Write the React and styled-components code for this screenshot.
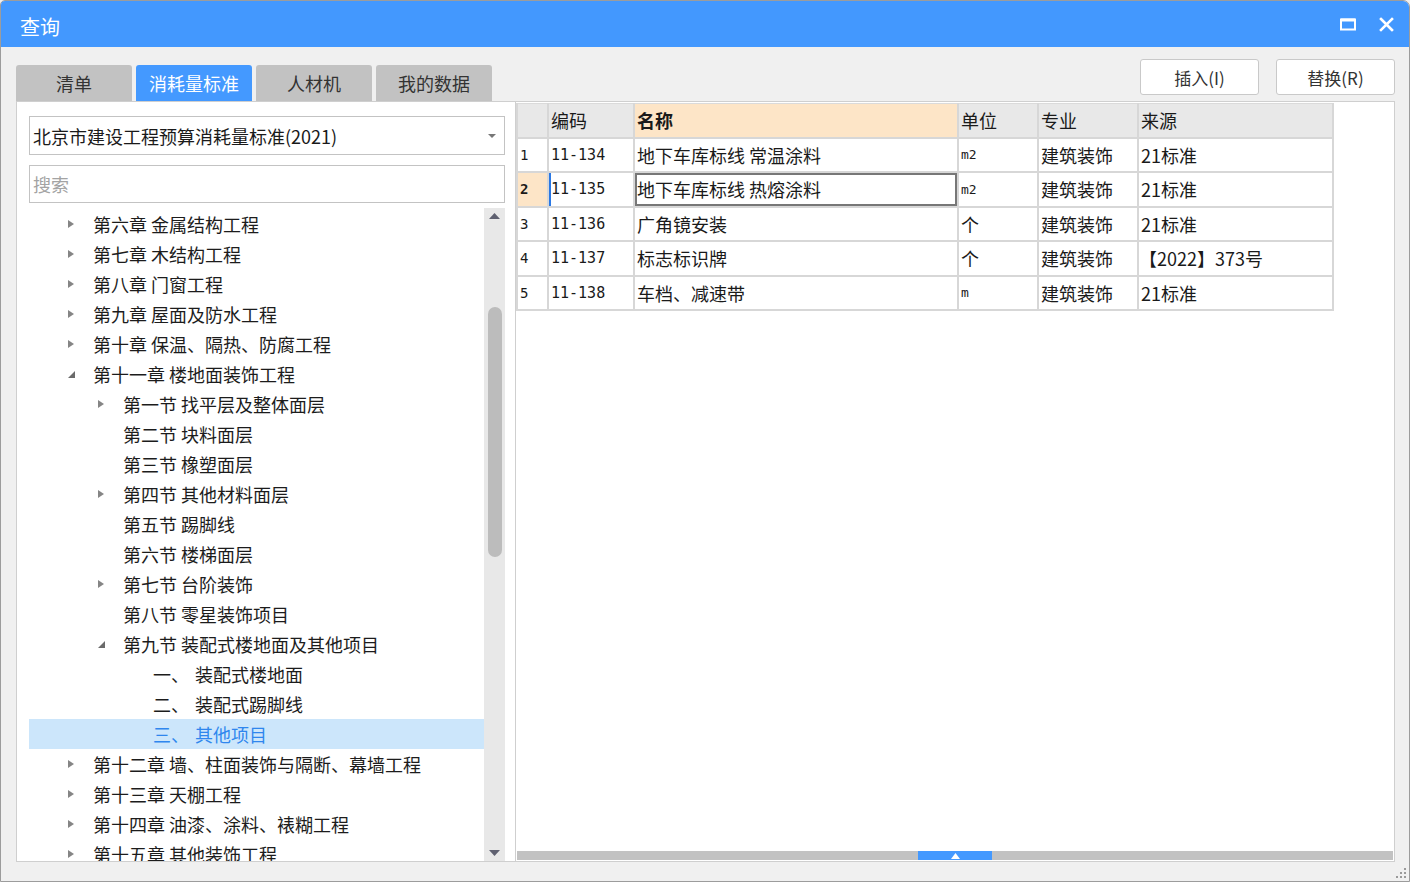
import React from "react";
import styled, { createGlobalStyle } from "styled-components";

const GlobalStyle = createGlobalStyle`
  html, body {
    margin: 0;
    padding: 0;
    background: #f0f0f0;
  }
  body {
    font-family: "Noto Sans CJK SC", "Noto Sans", sans-serif;
    color: #1a1a1a;
  }
  * {
    box-sizing: border-box;
  }
`;

const Window = styled.div`
  width: 1410px;
  height: 882px;
  border: 1px solid #9c9c9c;
  border-radius: 5px 7px 0 0;
  background: #f0f0f0;
  display: flex;
  flex-direction: column;
  overflow: hidden;
`;

const TitleBar = styled.div`
  height: 46px;
  flex: none;
  background: #4398fe;
  display: flex;
  align-items: center;
  padding: 0 11px 0 19px;
`;

const Title = styled.div`
  color: #fff;
  font-size: 20px;
  flex: 1;
  padding-top: 4px;
`;

const TitleButton = styled.div`
  width: 24px;
  height: 24px;
  display: flex;
  align-items: center;
  justify-content: center;
  margin-left: 14px;
`;

const Content = styled.div`
  flex: 1;
  display: flex;
  flex-direction: column;
  padding: 0 14px 0 15px;
`;

const TopRow = styled.div`
  height: 54px;
  flex: none;
  display: flex;
  justify-content: space-between;
`;

const Tabs = styled.div`
  display: flex;
  align-items: flex-end;
  gap: 4px;
`;

const Tab = styled.div`
  width: 116px;
  height: 36px;
  border-radius: 3px 3px 0 0;
  background: ${(p) => (p.$active ? "#4499ff" : "#c2c2c2")};
  color: ${(p) => (p.$active ? "#fff" : "#333")};
  font-size: 18px;
  display: flex;
  align-items: center;
  justify-content: center;
`;

const Actions = styled.div`
  display: flex;
  gap: 17px;
  padding-top: 12px;
`;

const Button = styled.div`
  width: 119px;
  height: 36px;
  background: #fff;
  border: 1px solid #c9c9c9;
  border-radius: 3px;
  font-size: 17px;
  color: #333;
  display: flex;
  align-items: center;
  justify-content: center;
`;

const Panels = styled.div`
  height: 761px;
  flex: none;
  display: flex;
`;

const LeftPanel = styled.div`
  width: 499px;
  background: #fff;
  border: 1px solid #cfcfcf;
  border-right: none;
  padding: 14px 10px 0 12px;
  display: flex;
  flex-direction: column;
`;

const Combo = styled.div`
  height: 39px;
  flex: none;
  border: 1px solid #c3c3c3;
  display: flex;
  align-items: center;
  padding: 0 8px 0 3px;
  font-size: 18px;
`;

const ComboText = styled.div`
  flex: 1;
`;

const ComboArrow = styled.div`
  width: 0;
  height: 0;
  border-left: 4px solid transparent;
  border-right: 4px solid transparent;
  border-top: 4px solid #777;
`;

const Search = styled.div`
  height: 38px;
  flex: none;
  margin-top: 10px;
  border: 1px solid #c3c3c3;
  display: flex;
  align-items: center;
  padding-left: 3px;
  font-size: 18px;
  color: #a3a3a3;
`;

const TreeArea = styled.div`
  flex: 1;
  margin-top: 5px;
  display: flex;
  min-height: 0;
`;

const TreeList = styled.div`
  flex: 1;
  overflow: hidden;
  padding-top: 1px;
`;

const TreeRow = styled.div`
  height: 30px;
  display: flex;
  align-items: center;
  padding-left: ${(p) => 39 + p.$level * 30}px;
  background: ${(p) => (p.$selected ? "#cce6fb" : "transparent")};
  color: ${(p) => (p.$selected ? "#2f86ee" : "#1c1c1c")};
  font-size: 18px;
  white-space: pre;
`;

const Toggle = styled.div`
  width: 25px;
  flex: none;
  display: flex;
  align-items: center;
`;

const Collapsed = styled.div`
  width: 0;
  height: 0;
  border-top: 4.5px solid transparent;
  border-bottom: 4.5px solid transparent;
  border-left: 6px solid #858585;
`;

const Num = styled.span`
  display: inline-block;
  width: 42px;
`;

const VScroll = styled.div`
  width: 21px;
  flex: none;
  background: #e8e8e8;
  display: flex;
  flex-direction: column;
  align-items: center;
`;

const ScrollArrow = styled.div`
  height: 16px;
  flex: none;
  display: flex;
  align-items: center;
  justify-content: center;
`;

const VTrack = styled.div`
  flex: 1;
  width: 100%;
  display: flex;
  justify-content: center;
  padding-top: 83px;
`;

const VThumb = styled.div`
  width: 14px;
  height: 250px;
  border-radius: 7px;
  background: #bcbcbc;
`;

const RightPanel = styled.div`
  flex: 1;
  background: #fff;
  border: 1px solid #cfcfcf;
  padding: 1px 1px 1px 0;
  display: flex;
  flex-direction: column;
`;

const TableArea = styled.div`
  flex: 1;
`;

const Grid = styled.table`
  border-collapse: collapse;
  table-layout: fixed;
  width: 816px;
  border-top: 1px solid #dadada;
`;

const HeadCell = styled.th`
  height: 34px;
  padding: 0 0 0 2px;
  text-align: left;
  font-size: 18px;
  font-weight: ${(p) => (p.$active ? 700 : 400)};
  background: ${(p) => (p.$active ? "#fde5c7" : "#e8e8e8")};
  border: 2px solid #d7d7d7;
  border-top: none;
  border-bottom: ${(p) => (p.$active ? "1px solid #6fa9f2" : "2px solid #d7d7d7")};
`;

const Cell = styled.td`
  height: 34.5px;
  padding: 0 0 0 ${(p) => (p.$pad ?? 2)}px;
  font-size: ${(p) => p.$size || 18}px;
  font-family: ${(p) =>
    p.$mono
      ? '"DejaVu Sans Mono", "Liberation Mono", monospace'
      : '"Noto Sans CJK SC", "Noto Sans", sans-serif'};
  font-weight: ${(p) => (p.$bold ? 700 : 400)};
  background: ${(p) => (p.$marked ? "#fde5c7" : "#fff")};
  border: 2px solid #d7d7d7;
  white-space: nowrap;
  box-shadow: ${(p) =>
    p.$current
      ? "inset 0 0 0 2px #777"
      : p.$leftMark
      ? "inset 2px 0 0 0 #2a78e4"
      : "none"};
`;

const HScroll = styled.div`
  height: 9px;
  flex: none;
  margin-left: 1px;
  background: #c2c2c2;
  display: flex;
  padding-left: 401px;
`;

const HThumb = styled.div`
  width: 74px;
  height: 9px;
  background: #4499ff;
  display: flex;
  align-items: center;
  justify-content: center;
`;

const Footer = styled.div`
  flex: 1;
  display: flex;
  justify-content: flex-end;
  align-items: flex-end;
  padding-bottom: 2px;
  margin-right: -12px;
`;

const Grip = () => (
  <svg width="12" height="12" viewBox="0 0 12 12">
    {[
      [9, 1],
      [9, 5],
      [5, 5],
      [9, 9],
      [5, 9],
      [1, 9],
    ].map(([x, y]) => (
      <rect key={`${x}-${y}`} x={x} y={y} width="2" height="2" fill="#9a9a9a" />
    ))}
  </svg>
);

const Expanded = () => (
  <svg width="9" height="9" viewBox="0 0 9 9" style={{ marginLeft: -1 }}>
    <polygon points="8,1 8,8 1,8" fill="#6b6b6b" />
  </svg>
);

const tree = [
  { level: 0, toggle: "c", text: "第六章 金属结构工程" },
  { level: 0, toggle: "c", text: "第七章 木结构工程" },
  { level: 0, toggle: "c", text: "第八章 门窗工程" },
  { level: 0, toggle: "c", text: "第九章 屋面及防水工程" },
  { level: 0, toggle: "c", text: "第十章 保温、隔热、防腐工程" },
  { level: 0, toggle: "e", text: "第十一章 楼地面装饰工程" },
  { level: 1, toggle: "c", text: "第一节 找平层及整体面层" },
  { level: 1, text: "第二节 块料面层" },
  { level: 1, text: "第三节 橡塑面层" },
  { level: 1, toggle: "c", text: "第四节 其他材料面层" },
  { level: 1, text: "第五节 踢脚线" },
  { level: 1, text: "第六节 楼梯面层" },
  { level: 1, toggle: "c", text: "第七节 台阶装饰" },
  { level: 1, text: "第八节 零星装饰项目" },
  { level: 1, toggle: "e", text: "第九节 装配式楼地面及其他项目" },
  { level: 2, num: "一、", text: "装配式楼地面" },
  { level: 2, num: "二、", text: "装配式踢脚线" },
  { level: 2, num: "三、", text: "其他项目", selected: true },
  { level: 0, toggle: "c", text: "第十二章 墙、柱面装饰与隔断、幕墙工程" },
  { level: 0, toggle: "c", text: "第十三章 天棚工程" },
  { level: 0, toggle: "c", text: "第十四章 油漆、涂料、裱糊工程" },
  { level: 0, toggle: "c", text: "第十五章 其他装饰工程" },
];

const rows = [
  { code: "11-134", name: "地下车库标线 常温涂料", unit: "m2", major: "建筑装饰", source: "21标准" },
  { code: "11-135", name: "地下车库标线 热熔涂料", unit: "m2", major: "建筑装饰", source: "21标准" },
  { code: "11-136", name: "广角镜安装", unit: "个", major: "建筑装饰", source: "21标准" },
  { code: "11-137", name: "标志标识牌", unit: "个", major: "建筑装饰", source: "【2022】373号" },
  { code: "11-138", name: "车档、减速带", unit: "m", major: "建筑装饰", source: "21标准" },
];

const tabs = ["清单", "消耗量标准", "人材机", "我的数据"];

export default function App() {
  const currentRow = 1;
  return (
    <>
      <GlobalStyle />
      <Window>
        <TitleBar>
          <Title>查询</Title>
          <TitleButton>
            <svg width="16" height="13" viewBox="0 0 16 13">
              <rect x="1" y="1.5" width="14" height="10" fill="none" stroke="#fff" strokeWidth="2" />
              <rect x="1" y="0.5" width="14" height="3" fill="#fff" />
            </svg>
          </TitleButton>
          <TitleButton>
            <svg width="15" height="15" viewBox="0 0 15 15">
              <path d="M2 2 L13 13 M13 2 L2 13" stroke="#fff" strokeWidth="2.6" strokeLinecap="square" />
            </svg>
          </TitleButton>
        </TitleBar>

        <Content>
          <TopRow>
            <Tabs>
              {tabs.map((t, i) => (
                <Tab key={t} $active={i === 1}>
                  {t}
                </Tab>
              ))}
            </Tabs>
            <Actions>
              <Button>插入(I)</Button>
              <Button>替换(R)</Button>
            </Actions>
          </TopRow>

          <Panels>
            <LeftPanel>
              <Combo>
                <ComboText>北京市建设工程预算消耗量标准(2021)</ComboText>
                <ComboArrow />
              </Combo>
              <Search>搜索</Search>
              <TreeArea>
                <TreeList>
                  {tree.map((n, i) => (
                    <TreeRow key={i} $level={n.level} $selected={n.selected}>
                      <Toggle>
                        {n.toggle === "c" && <Collapsed />}
                        {n.toggle === "e" && <Expanded />}
                      </Toggle>
                      {n.num && <Num>{n.num}</Num>}
                      {n.text}
                    </TreeRow>
                  ))}
                </TreeList>
                <VScroll>
                  <ScrollArrow>
                    <svg width="11" height="6" viewBox="0 0 11 6">
                      <polygon points="0,6 5.5,0 11,6" fill="#5f6070" />
                    </svg>
                  </ScrollArrow>
                  <VTrack>
                    <VThumb />
                  </VTrack>
                  <ScrollArrow>
                    <svg width="11" height="6" viewBox="0 0 11 6">
                      <polygon points="0,0 5.5,6 11,0" fill="#5f6070" />
                    </svg>
                  </ScrollArrow>
                </VScroll>
              </TreeArea>
            </LeftPanel>

            <RightPanel>
              <TableArea>
                <Grid>
                  <colgroup>
                    <col style={{ width: 31 }} />
                    <col style={{ width: 86 }} />
                    <col style={{ width: 324 }} />
                    <col style={{ width: 80 }} />
                    <col style={{ width: 100 }} />
                    <col style={{ width: 195 }} />
                  </colgroup>
                  <thead>
                    <tr>
                      <HeadCell />
                      <HeadCell>编码</HeadCell>
                      <HeadCell $active>名称</HeadCell>
                      <HeadCell>单位</HeadCell>
                      <HeadCell>专业</HeadCell>
                      <HeadCell>来源</HeadCell>
                    </tr>
                  </thead>
                  <tbody>
                    {rows.map((r, i) => {
                      const cur = i === currentRow;
                      return (
                        <tr key={r.code}>
                          <Cell $mono $size={14} $pad={2} $marked={cur} $bold={cur}>
                            {i + 1}
                          </Cell>
                          <Cell $mono $size={15} $leftMark={cur}>
                            {r.code}
                          </Cell>
                          <Cell $current={cur}>{r.name}</Cell>
                          {r.unit === "个" ? (
                            <Cell>{r.unit}</Cell>
                          ) : (
                            <Cell $mono $size={13}>
                              {r.unit}
                            </Cell>
                          )}
                          <Cell>{r.major}</Cell>
                          <Cell $pad={r.source.startsWith("【") ? 0 : 2}>{r.source}</Cell>
                        </tr>
                      );
                    })}
                  </tbody>
                </Grid>
              </TableArea>
              <HScroll>
                <HThumb>
                  <svg width="9" height="6" viewBox="0 0 9 6">
                    <polygon points="0,6 4.5,0 9,6" fill="#fff" />
                  </svg>
                </HThumb>
              </HScroll>
            </RightPanel>
          </Panels>

          <Footer>
            <Grip />
          </Footer>
        </Content>
      </Window>
    </>
  );
}
